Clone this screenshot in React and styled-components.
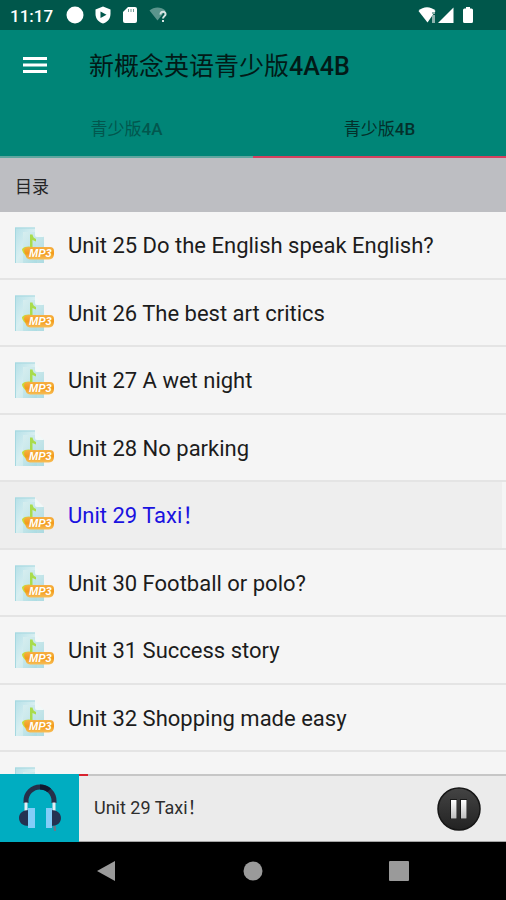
import React, { useState } from "react";
import styled, { createGlobalStyle } from "styled-components";

const GlobalStyle = createGlobalStyle`
  *, *::before, *::after { box-sizing: border-box; }
  html, body, #root { height: 100%; }
  body {
    margin: 0;
    font-family: Roboto, "Noto Sans CJK SC", sans-serif;
    background: #000;
  }
  button { font: inherit; border: 0; padding: 0; background: none; cursor: pointer; }
  svg { display: block; flex: none; }
`;

const Screen = styled.div`
  display: flex;
  flex-direction: column;
  height: 100%;
  overflow: hidden;
  background: #f5f5f5;
`;

const StatusBar = styled.div`
  display: flex;
  align-items: center;
  justify-content: space-between;
  flex: none;
  height: 30px;
  padding: 0 32px 0 10px;
  background: #00574b;
  color: #fff;
`;

const StatusGroup = styled.div`
  display: flex;
  align-items: center;
  gap: ${(p) => p.$gap}px;
`;

const Clock = styled.time`
  font-size: 17px;
  line-height: 20px;
  font-weight: 500;
  margin-right: 2px;
  padding-top: 2px;
`;

const AppBar = styled.header`
  flex: none;
  background: #008577;
`;

const Toolbar = styled.div`
  display: flex;
  align-items: center;
  height: 70px;
  padding: 0 16px;
`;

const MenuButton = styled.button`
  display: grid;
  place-items: center;
  width: 38px;
  height: 38px;
  margin-right: 35px;
`;

const Title = styled.h1`
  margin: 0;
  padding-top: 4px;
  font-size: 25px;
  line-height: 32px;
  font-weight: 400;
  color: #021a17;
`;

const Latin = styled.span`
  font-weight: ${(p) => (p.$medium ? 500 : 400)};
`;

const Tabs = styled.div`
  display: grid;
  grid-template-columns: 1fr 1fr;
  height: 58px;
`;

const Tab = styled.button`
  color: ${(p) => (p.$active ? "#04302b" : "#02574e")};
  font-size: 17px;
  line-height: 24px;
  padding-top: 2px;
  border-bottom: 2px solid ${(p) => (p.$active ? "#d5405f" : "#5fa69f")};
`;

const SectionTitle = styled.h2`
  flex: none;
  margin: 0;
  padding: 4px 15px 0;
  font-size: 17px;
  line-height: 50px;
  font-weight: 400;
  color: #262627;
  background: #bdbec2;
`;

const UnitList = styled.ul`
  flex: 1 1 0;
  min-height: 0;
  margin: 0;
  padding: 0;
  list-style: none;
  overflow-y: auto;
  scrollbar-width: none;
`;

const UnitItem = styled.li`
  height: 67px;
  padding-right: ${(p) => (p.$selected ? 4 : 0)}px;
  border-bottom: 2px solid #e4e4e4;
  &:nth-child(odd) { height: 68px; }
`;

const UnitButton = styled.button`
  display: flex;
  align-items: center;
  gap: 13px;
  width: 100%;
  height: 100%;
  padding: 0 14px;
  text-align: left;
  font-size: 22px;
  line-height: 28px;
  color: ${(p) => (p.$selected ? "#1a12e0" : "#1c1c1c")};
  background: ${(p) => (p.$selected ? "#eeeeee" : "transparent")};
`;

const UnitName = styled.span`
  padding-top: 2px;
`;

const Player = styled.section`
  display: flex;
  flex: none;
  height: 68px;
  background: #ebebeb;
`;

const Cover = styled.div`
  display: grid;
  place-items: center;
  width: 79px;
  background: #00adc1;
`;

const PlayerBody = styled.div`
  display: flex;
  flex-direction: column;
  flex: 1;
`;

const Progress = styled.div`
  height: 2px;
  background: #c6c6c6;
`;

const ProgressFill = styled.div`
  height: 100%;
  background: #d8232f;
`;

const NowPlaying = styled.div`
  display: flex;
  align-items: center;
  justify-content: space-between;
  flex: 1;
  padding: 0 25px 0 15px;
  font-size: 18px;
  line-height: 24px;
  color: #2e2e2e;
  border-bottom: 1px solid #a5a5a5;
`;

const TrackName = styled.span`
  padding-bottom: 2px;
`;

const PlayButton = styled.button`
  flex: none;
`;

const NavBar = styled.nav`
  display: grid;
  grid-template-columns: repeat(3, 146px);
  justify-content: center;
  flex: none;
  height: 58px;
  background: #000;
`;

const NavButton = styled.button`
  display: grid;
  place-items: center;
`;

const Mp3Icon = () => (
  <svg width="41" height="38" viewBox="0 0 41 38" aria-hidden="true">
    <defs>
      <linearGradient id="page" x1="0" y1="0" x2="1" y2="1">
        <stop offset="0" stopColor="#b5e0e8" />
        <stop offset="0.5" stopColor="#d8eff1" />
        <stop offset="1" stopColor="#b9e2e8" />
      </linearGradient>
      <linearGradient id="sheet" x1="0" y1="0" x2="1" y2="1">
        <stop offset="0" stopColor="#d9eff0" />
        <stop offset="1" stopColor="#9fd6de" />
      </linearGradient>
      <linearGradient id="badge" x1="0" y1="0" x2="0" y2="1">
        <stop offset="0" stopColor="#f6b045" />
        <stop offset="0.5" stopColor="#f39a1c" />
        <stop offset="1" stopColor="#f8bf58" />
      </linearGradient>
    </defs>
    <path d="M1 1.500H21L23 37H1Z" fill="url(#page)" />
    <path d="M1.500 2V37M1 2H21" stroke="#a5d8e0" strokeWidth="1" />
    <path d="M9 6H22L30 11V37H9Z" fill="url(#sheet)" opacity="0.85" />
    <path d="M21 2L30 11H23Q21 11 21 9Z" fill="#f2f8f8" />
    <path d="M16 23V8.500H18.500Q19 12 22 13V15.500L18.500 14V23Z" fill="#a9dc4c" />
    <path d="M8 23C10 20 16 20 19 21L15 31C11 30 8 26 8 23Z" fill="#cbd936" />
    <path d="M14 21H36Q40 21 40 25V28Q40 33 35 33.500H16Q12 33 11.500 29L10 25Q10 21 14 21Z" fill="url(#badge)" />
    <text x="15" y="31" fontFamily="Liberation Sans, sans-serif" fontSize="11" fontWeight="700" fontStyle="italic" fill="#fff">MP3</text>
  </svg>
);

const Headphones = () => (
  <svg width="44" height="48" viewBox="0 0 44 48" aria-hidden="true">
    <path d="M8 19V17A14 14 0 0 1 36 17V19" fill="none" stroke="#26304a" strokeWidth="5" />
    <path d="M22 0.500C26 0.500 30 2 33 4.500L29.500 8C27.500 6.500 25 5.500 22 5.500Z" fill="#101a30" />
    <path d="M6.500 18.500H9.500V27H6.500ZM34.500 18.500H37.500V27H34.500Z" fill="#e2eef4" />
    <path d="M11 26V42C5 42 1 39 1 34S5 26 11 26ZM33 26V42C39 42 43 39 43 34S39 26 33 26Z" fill="#243252" />
    <path d="M10 24H17V44H10ZM28 24H34V44H28Z" fill="#83cdf8" />
    <path d="M35 42H38V47H36Z" fill="#68798b" />
  </svg>
);

const PauseIcon = () => (
  <svg width="44" height="44" viewBox="0 0 44 44" aria-hidden="true">
    <defs>
      <linearGradient id="disc" x1="0" y1="0" x2="0" y2="1">
        <stop offset="0" stopColor="#444" />
        <stop offset="1" stopColor="#222" />
      </linearGradient>
      <linearGradient id="bars" x1="0" y1="0" x2="0" y2="1">
        <stop offset="0" stopColor="#fff" />
        <stop offset="1" stopColor="#bcbcbc" />
      </linearGradient>
    </defs>
    <circle cx="22" cy="22" r="21" fill="url(#disc)" stroke="#161616" strokeWidth="1.500" />
    <path d="M13 12H20V32H13ZM23 12H30V32H23Z" fill="#191919" />
    <path d="M14 13H19.500V31.500H14ZM24 13H29.500V31.500H24Z" fill="url(#bars)" />
  </svg>
);

const units = [
  "Unit 25 Do the English speak English?",
  "Unit 26 The best art critics",
  "Unit 27 A wet night",
  "Unit 28 No parking",
  "Unit 29 Taxi！",
  "Unit 30 Football or polo?",
  "Unit 31 Success story",
  "Unit 32 Shopping made easy",
  "",
];

export default function App() {
  const [tab, setTab] = useState("4B");
  const [selected, setSelected] = useState(4);
  return (
    <>
      <GlobalStyle />
      <Screen>
        <StatusBar>
          <StatusGroup $gap={11}>
            <Clock>11:17</Clock>
            <svg width="18" height="18" viewBox="0 0 18 18"><circle cx="9" cy="9" r="8.500" fill="#fff" /></svg>
            <svg width="16" height="18" viewBox="0 0 16 18">
              <path d="M8 0.500L15.500 3.500V8C15.500 13 12 16.500 8 17.500C4 16.500 0.500 13 0.500 8V3.500Z" fill="#fff" />
              <path d="M5.500 5.500V12L11.500 8.700Z" fill="#00574b" />
            </svg>
            <svg width="16" height="18" viewBox="0 0 16 18">
              <path d="M6 1H13Q15 1 15 3V15Q15 17 13 17H3Q1 17 1 15V6Z" fill="#fff" />
              <path d="M6.500 3V6M9 3V6M11.500 3V6" stroke="#6f9c95" strokeWidth="1" />
            </svg>
            <svg width="18" height="18" viewBox="0 0 18 18">
              <path d="M0.500 4.500C5 0.500 12 0.500 16.500 4.500L8.500 14.500Z" fill="#5b958d" />
              <path d="M11.500 8.500C11.500 4.500 17 5 16.500 8.500C16.300 10 14 10.500 14 12.500M14 14V16" fill="none" stroke="#d6e5e3" strokeWidth="2" />
            </svg>
          </StatusGroup>
          <StatusGroup $gap={8}>
            <svg width="36" height="18" viewBox="0 0 36 18">
              <path d="M0.500 5C5 0 13 0 17.500 5L9.500 16.500Z" fill="#fff" />
              <path d="M15.500 6V8M15.500 9V17" stroke="#8fb3ae" strokeWidth="3" />
              <path d="M20 17L35.500 1.500V17Z" fill="#fff" />
            </svg>
            <svg width="12" height="18" viewBox="0 0 12 18">
              <path d="M4 1H8V2.500H9.500Q11 2.500 11 4V15.500Q11 17 9.500 17H2.500Q1 17 1 15.500V4Q1 2.500 2.500 2.500H4Z" fill="#fff" />
            </svg>
          </StatusGroup>
        </StatusBar>
        <AppBar>
          <Toolbar>
            <MenuButton aria-label="菜单">
              <svg width="24" height="18" viewBox="0 0 24 18">
                <path d="M0 2.500H24M0 9H24M0 15.500H24" stroke="#fff" strokeWidth="3" />
              </svg>
            </MenuButton>
            <Title>新概念英语青少版<Latin $medium>4A4B</Latin></Title>
          </Toolbar>
          <Tabs role="tablist">
            {["4A", "4B"].map((t) => (
              <Tab key={t} role="tab" aria-selected={tab === t} $active={tab === t} onClick={() => setTab(t)}>
                青少版<Latin $medium>{t}</Latin>
              </Tab>
            ))}
          </Tabs>
        </AppBar>
        <SectionTitle>目录</SectionTitle>
        <UnitList>
          {units.map((name, i) => (
            <UnitItem key={i} $selected={i === selected}>
              <UnitButton $selected={i === selected} onClick={() => setSelected(i)}>
                <Mp3Icon />
                <UnitName>{name}</UnitName>
              </UnitButton>
            </UnitItem>
          ))}
        </UnitList>
        <Player>
          <Cover><Headphones /></Cover>
          <PlayerBody>
            <Progress><ProgressFill style={{ width: "2%" }} /></Progress>
            <NowPlaying>
              <TrackName>Unit 29 Taxi！</TrackName>
              <PlayButton aria-label="暂停"><PauseIcon /></PlayButton>
            </NowPlaying>
          </PlayerBody>
        </Player>
        <NavBar>
          <NavButton aria-label="返回">
            <svg width="20" height="22" viewBox="0 0 20 22"><path d="M0 11L18 1V21Z" fill="#9a9a9a" /></svg>
          </NavButton>
          <NavButton aria-label="主页">
            <svg width="20" height="20" viewBox="0 0 20 20"><circle cx="10" cy="10" r="9.500" fill="#9a9a9a" /></svg>
          </NavButton>
          <NavButton aria-label="最近任务">
            <svg width="20" height="20" viewBox="0 0 20 20"><rect width="20" height="20" rx="1" fill="#9a9a9a" /></svg>
          </NavButton>
        </NavBar>
      </Screen>
    </>
  );
}
